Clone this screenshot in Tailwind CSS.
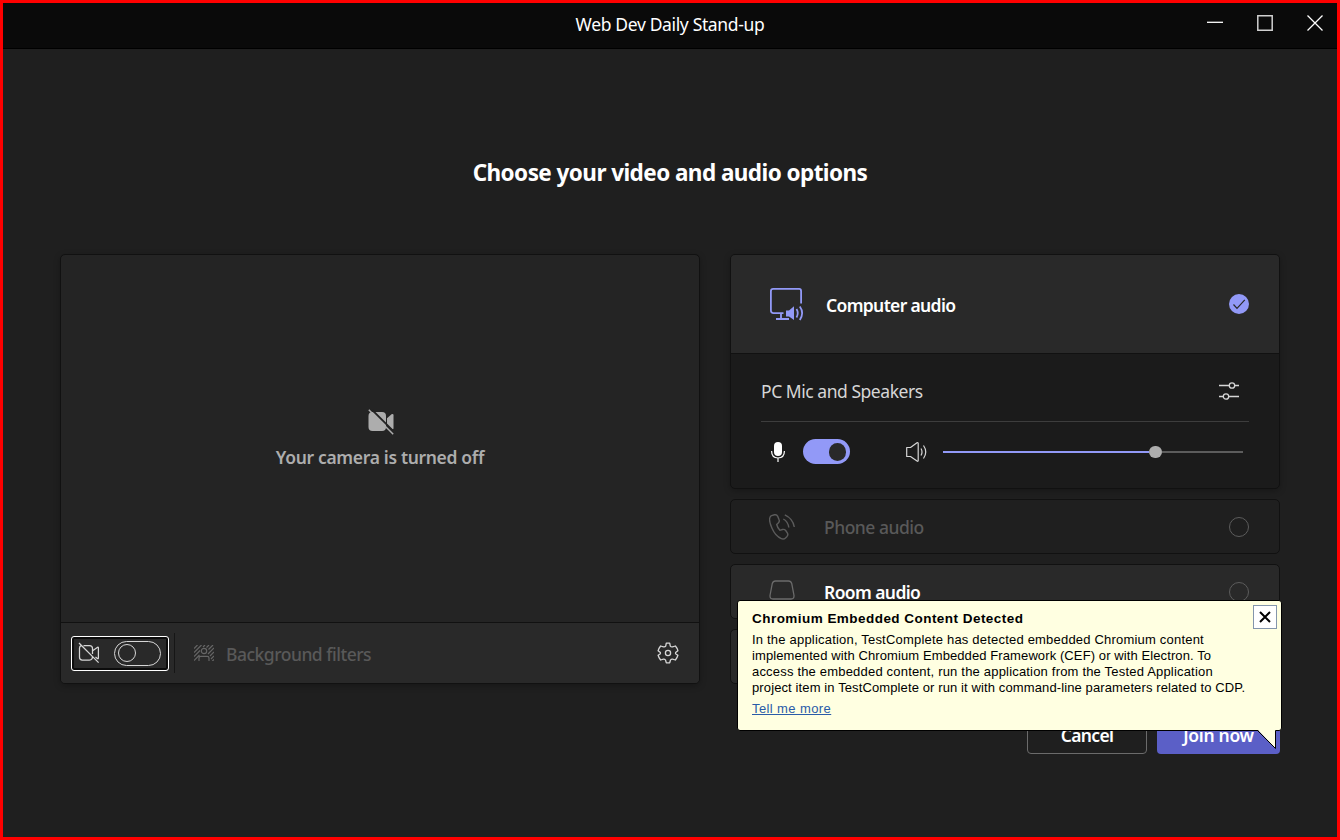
<!DOCTYPE html>
<html lang="en">
<head>
<meta charset="utf-8">
<title>Web Dev Daily Stand-up</title>
<script src="https://cdn.jsdelivr.net/npm/@tailwindcss/browser@4"></script>
</head>
<body class="h-[840px] w-[1340px] overflow-hidden bg-[#1f1f1f] font-['Noto_Sans',sans-serif] text-white">
<div class="relative flex h-[840px] w-[1340px] flex-col border-3 border-[#ff0000]">
  <!-- Title bar -->
  <header class="flex h-[46px] shrink-0 items-center border-b border-black bg-[#0a0a0a]">
    <div class="w-[178px]"></div>
    <h1 class="-mt-1 flex-1 text-center text-[17.5px] leading-6 font-normal tracking-[-0.35px] whitespace-nowrap">Web Dev Daily Stand-up</h1>
    <div class="-mt-[5px] flex w-[178px] justify-end gap-[34px] pr-[14px]">
      <svg class="size-4" viewBox="0 0 16 16" stroke="#fff" stroke-width="1.3"><path d="M0 7.3h16"/></svg>
      <svg class="size-4" viewBox="0 0 16 16" fill="none" stroke="#d0d0d0" stroke-width="1.5"><path d="M.8.8h14.4v14.4H.8z"/></svg>
      <svg class="size-4" viewBox="0 0 16 16" stroke="#fff" stroke-width="1.3"><path d="M.5.5l15 15M15.5.5l-15 15"/></svg>
    </div>
  </header>

  <main class="flex flex-1 flex-col px-[57px]">
    <h2 class="mt-[108px] h-8 text-center text-[22.5px] leading-8 font-bold tracking-[-0.56px] whitespace-nowrap">Choose your video and audio options</h2>

    <div class="mt-[65px] flex gap-[30px]">
      <!-- Video preview -->
      <section class="flex h-[430px] w-[640px] flex-col rounded-[5px] border border-[#111] bg-[#242424] shadow-[0_2px_6px_rgba(0,0,0,0.25)]">
        <div class="flex flex-1 flex-col items-center pt-[154px]">
          <svg class="ml-px h-[26px] w-[26px]" viewBox="0 0 26 26"><rect x=".5" y="3" width="17.5" height="19" rx="4" fill="#adadad"/><path d="M19 9.200 23.500 5.300Q25.500 4.200 25.500 6.200V19Q25.500 21 23.500 19.800L19 16z" fill="#adadad"/><path d="M2.700 -.5 27 23.800" stroke="#242424" stroke-width="1.8"/><path d="M.8.8 25.200 25.200" stroke="#adadad" stroke-width="1.5"/></svg>
          <p class="mt-[10px] text-[17.5px] leading-6 font-semibold tracking-[-0.33px] whitespace-nowrap text-[#adadad]">Your camera is turned off</p>
        </div>
        <div class="flex h-[61px] items-center rounded-b-[4px] border-t border-[#111] bg-[#292929] pl-[10px]">
          <div class="flex h-[35px] w-[98px] items-center justify-between rounded-[3px] border border-white pr-[7px] pl-[6px] shadow-[inset_0_0_0_2px_#0c0c0c]">
            <svg class="h-[22px] w-[22px]" viewBox="0 0 22 22" fill="none" stroke="#d6d6d6" stroke-width="1.25"><path d="M5.500 3.600H11.500Q14.500 3.600 14.500 6.600V12M14.500 14.500Q14.500 18 11.500 18H4.200Q1.500 18 1.500 15.300V6.300Q1.500 4.200 3.200 3.700M15 8.500 19.600 5.200Q20.400 4.800 20.400 5.800V16Q20.400 17.200 19.400 16.500L17.500 15M1 1 20.600 20.600"/></svg>
            <div class="flex h-[25px] w-[47px] items-center rounded-full border border-[#d6d6d6] pl-[3px]"><div class="size-[18px] rounded-full border border-[#d6d6d6]"></div></div>
          </div>
          <div class="ml-[5px] h-10 w-px bg-[#161616]"></div>
          <svg class="ml-[19px] h-4 w-5" viewBox="0 0 20 16" fill="none" stroke="#666" stroke-width="1.2"><circle cx="10" cy="6" r="2.7"/><path d="M5 16V13Q5 11.400 6.800 11.400H13.200Q15 11.400 15 13V16M0 3.500 3.500 0M0 7.500 7.500 0M0 11.500 6 5.500M0 15.500 5.500 10M9 2 11 0M12.500 2.500 15 0M14.500 4.500 19 0M14 9 20 3M16 11 20 7M17 14 20 11M17 17.500 20 14.500"/></svg>
          <span class="mt-px ml-3 text-[17.5px] leading-6 font-medium tracking-[-0.5px] whitespace-nowrap text-[#595959]">Background filters</span>
          <svg class="mr-5 ml-auto size-[22px]" viewBox="0 0 22 22" fill="none" stroke="#d6d6d6" stroke-width="1.3" stroke-linejoin="round"><circle cx="11" cy="11" r="2.6"/><path d="M9.300 1.200H12.700L13.300 4.200Q14.100 5.200 15.500 4.900L18.400 4Q20.300 6.100 20.900 8.700L18.600 10.600Q18.300 11.500 18.900 12L20.900 13.300Q20.100 16.100 18.400 18L15.500 17.100Q14.200 17 13.500 18L12.700 20.800H9.300L8.500 18Q7.800 17 6.500 17.100L3.600 18Q1.900 16.100 1.100 13.300L3.100 12Q3.700 11.300 3.400 10.600L1.100 8.700Q1.900 6.100 3.600 4L6.500 4.900Q8 5.200 8.700 4.200z"/></svg>
        </div>
      </section>

      <!-- Audio choices -->
      <section class="flex w-[550px] flex-col gap-[10px]">
        <div class="flex h-[235px] flex-col rounded-[5px] border border-[#111] bg-[#1b1b1b] shadow-[0_2px_6px_rgba(0,0,0,0.25)]">
          <div class="flex h-[99px] items-center rounded-t-[4px] border-b border-[#111] bg-[#292929] pr-[30px] pl-[38px]">
            <svg class="h-[34px] w-[35px]" viewBox="0 0 35 34" fill="none" stroke="#9299f7" stroke-width="1.8"><path d="M14.500 26.100H4.500Q1.900 26.100 1.900 23.500V4.200Q1.900 1.900 4.200 1.900H30.200Q32.100 1.900 32.100 4.200V16.500M12 26V32M7 32H20"/><path d="M17 23.500H20L25 19.300V33L20 29.500H17z" fill="#9299f7" stroke="none"/><path d="M27.500 22Q30 26 27.500 30.500M30.800 19.500Q35.500 26 30.800 33"/></svg>
            <span class="mt-px ml-[22px] text-[17.5px] leading-6 font-semibold tracking-[-0.65px] whitespace-nowrap">Computer audio</span>
            <svg class="ml-auto size-5" viewBox="0 0 20 20"><circle cx="10" cy="10" r="10" fill="#9299f7"/><path d="M4.500 10.500 8 14.300 15.800 5.800" fill="none" stroke="#292929" stroke-width="1.2"/></svg>
          </div>
          <div class="mx-[30px] flex h-[68px] items-center justify-between border-b border-[#3d3d3d] pt-[7px] pr-2">
            <span class="text-[17.5px] leading-6 tracking-[-0.46px] whitespace-nowrap text-[#d6d6d6]">PC Mic and Speakers</span>
            <svg class="mr-[2px] h-5 w-5" viewBox="0 0 20 20" fill="none" stroke="#d6d6d6" stroke-width="1.3"><path d="M0 4.500H10M16 4.500H20M0 15.500H4M10 15.500H20"/><circle cx="13" cy="4.5" r="2.7"/><circle cx="7" cy="15.5" r="2.7"/></svg>
          </div>
          <div class="flex h-[59px] items-center pl-[40px]">
            <svg class="h-5 w-[14px]" viewBox="0 0 14 20"><rect x="3" y="0" width="8" height="14" rx="4" fill="#fff"/><path d="M.6 9Q.6 16 7 16T13.400 9M7 16V20" fill="none" stroke="#fff" stroke-width="1.2"/></svg>
            <div class="ml-[18px] flex h-[25px] w-[47px] items-center justify-end rounded-full bg-[#9299f7] pr-1"><div class="h-[18px] w-[17px] rounded-full bg-[#292929]"></div></div>
            <svg class="ml-[56px] h-5 w-[21px]" viewBox="0 0 21 20" fill="none" stroke="#d6d6d6" stroke-width="1.2" stroke-linejoin="round"><path d="M.7 5.500H4.500L11 .8Q12.200 .2 12.200 1.500V18.500Q12.200 19.800 11 19L4.500 14.500H.7zM15 6.500Q17 10 15 13.500M17.500 3.500Q22 10 17.500 16.500"/></svg>
            <div class="mt-px ml-4 flex h-3 w-[300px] items-center"><div class="h-[2px] w-[206px] bg-[#9299f7]"></div><div class="h-3 w-[13px] rounded-full bg-[#adadad]"></div><div class="h-[2px] flex-1 bg-[#5c5c5c]"></div></div>
          </div>
        </div>

        <div class="flex h-[55px] items-center rounded-[5px] border border-[#111] bg-[#1f1f1f] pr-[30px] pl-[38px]">
          <svg class="h-[26px] w-[26px]" viewBox="0 0 26 26" fill="none" stroke="#5c5c5c" stroke-width="1.4"><path d="M2.500 1.700 5.500 .8Q7.700 .3 8.700 2.400L10 5.500Q10.900 7.500 9.300 9L7.700 10.500Q8.500 13.800 10.900 16.300L13.500 15.500Q15.400 15 16.700 16.500L18.300 18.800Q19.500 20.700 18 22.400L16.500 23.900Q14.700 25.600 12.300 24.600Q6.500 22.300 3 14.300Q-.5 6.500 1 3.300Q1.500 2.100 2.500 1.700zM14.300 5Q19 7.500 19.800 13.500M15.800 .8Q24 4.500 25.300 13"/></svg>
          <span class="ml-[29px] text-[17.5px] leading-6 font-medium tracking-[-0.5px] whitespace-nowrap text-[#595959]">Phone audio</span>
          <div class="ml-auto size-5 rounded-full border border-[#5c5c5c]"></div>
        </div>
        <div class="flex h-[55px] items-center rounded-[5px] border border-[#111] bg-[#292929] pr-[30px] pl-[38px]">
          <svg class="-mt-[3px] h-[20px] w-[26px]" viewBox="0 0 26 20" fill="none" stroke="#6b6b6b" stroke-width="1.3"><path d="M6.500 1H19.500Q22 1 22.700 3.500L25 15.500Q25.300 19 22 19H4Q.7 19 1 15.500L3.300 3.500Q4 1 6.500 1z"/></svg>
          <span class="ml-[29px] text-[17.5px] leading-6 font-semibold tracking-[-0.6px] whitespace-nowrap">Room audio</span>
          <div class="ml-auto size-5 rounded-full border border-[#5c5c5c]"></div>
        </div>
        <div class="h-[55px] rounded-[5px] border border-[#111] bg-[#292929]"></div>
      </section>
    </div>

    <div class="mt-[30px] flex justify-end gap-[10px] text-[17.5px] leading-6 font-semibold">
      <button class="h-10 w-[120px] rounded-[4px] border border-[#6b6b6b] pt-[2px] tracking-[-0.7px]">Cancel</button>
      <button class="h-10 w-[123px] rounded-[4px] bg-[#5b5fc7] pt-[2px] tracking-[-0.3px]">Join now</button>
    </div>
  </main>

  <!-- Notification balloon -->
  <aside class="absolute top-[597px] left-[734px] h-[131px] w-[545px] rounded-[3px] border border-black bg-[#ffffe1] font-['Liberation_Sans',Arial,sans-serif] text-[13px] leading-4 text-black">
    <div class="flex flex-col items-start pt-[10px] pl-[14px] whitespace-nowrap">
      <strong class="text-[13.5px] leading-4 tracking-[0.46px]">Chromium Embedded Content Detected</strong>
      <p class="mt-[5px]"><span class="tracking-[0.2px]">In the application, TestComplete has detected embedded Chromium content</span><br><span class="tracking-[0.1px]">implemented with Chromium Embedded Framework (CEF) or with Electron. To</span><br><span class="tracking-[0.19px]">access the embedded content, run the application from the Tested Application</span><br><span class="tracking-[0.115px]">project item in TestComplete or run it with command-line parameters related to CDP.</span></p>
      <a class="mt-[5px] tracking-[0.4px] text-[#2a5ca8] underline">Tell me more</a>
    </div>
    <button class="absolute top-[4px] right-[4px] flex size-6 items-center justify-center border border-[#8496ac] bg-white"><svg class="size-3" viewBox="0 0 12 12" stroke="#000" stroke-width="2"><path d="M1 1 11 11M11 1 1 11"/></svg></button>
    <svg class="absolute top-[128px] left-[518px] h-[21px] w-[21px]" viewBox="0 0 21 21"><path d="M1 0 19.500 19.500V0z" fill="#ffffe1"/><path d="M1.500 1.500 19.500 19.500V1.500" fill="none" stroke="#000"/></svg>
  </aside>
</div>
</body>
</html>
